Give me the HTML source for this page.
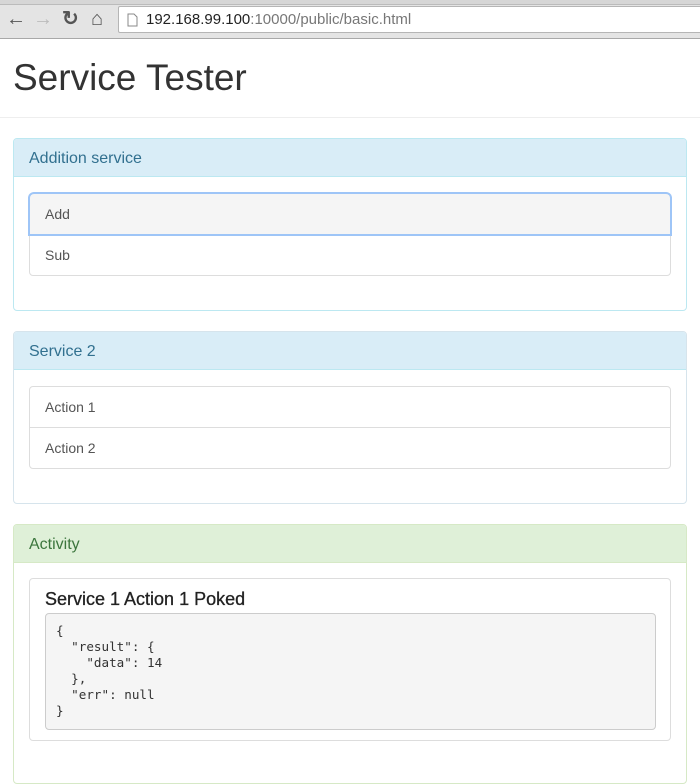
<!DOCTYPE html>
<html><head><meta charset="utf-8"><style>
*{box-sizing:border-box;margin:0;padding:0}
body{width:700px;height:770px;overflow:hidden;background:#fff;font-family:"Liberation Sans",Arial,sans-serif;color:#333;position:relative}
.chrome{position:absolute;left:0;top:0;width:700px;height:39px;background:#e4e4e4;border-bottom:1px solid #a8a8a8}
.tabs{position:absolute;left:0;top:0;width:700px;height:5px;background:#d6d6d6;border-bottom:1px solid #bbb}
.url{position:absolute;left:118px;top:6px;width:590px;height:27px;background:#fff;border:1px solid #b5b5b5;border-radius:2px;font-size:15px;line-height:25px;padding-left:27px;color:#222}
.url span{color:#777}
.ic{position:absolute;top:8px;font-size:20px;color:#555;line-height:22px;font-weight:bold}
h1{position:absolute;left:13px;top:56px;font-size:37px;font-weight:normal;line-height:44px;color:#333}
.hr{position:absolute;left:0;top:117px;width:700px;border-top:1px solid #eee}
.panel{position:absolute;left:13px;width:674px;border:1px solid #bce8f1;border-radius:4px;background:#fff}
.ph{height:38px;background:#d9edf7;border-bottom:1px solid #bce8f1;color:#31708f;font-size:16px;line-height:40px;padding-left:15px;border-radius:3px 3px 0 0}
.green{border-color:#d6e9c6}
.green .ph{background:#dff0d8;border-color:#d6e9c6;color:#3c763d}
.list{position:absolute;left:15px;width:642px;border:1px solid #ddd;border-radius:4px}
.li{height:40px;line-height:40px;padding-left:15px;font-size:14px;color:#555;position:relative}
.li+.li{border-top:1px solid #ddd;height:41px}
.well{position:absolute;left:15px;top:53px;width:642px;height:163px;border:1px solid #ddd;border-radius:4px}
.well h4{position:absolute;left:15px;top:10px;font-size:18px;font-weight:normal;color:#222;-webkit-text-stroke:0.3px #222}
pre{position:absolute;left:15px;top:34px;width:611px;height:117px;background:#f5f5f5;border:1px solid #ccc;border-radius:4px;font-family:"DejaVu Sans Mono",monospace;font-size:12.6px;line-height:16px;padding:9px 10px;color:#333}
</style></head><body>
<div class="chrome"><div class="tabs"></div>
<div class="ic" style="left:6px">&#8592;</div>
<div class="ic" style="left:33px;color:#bbb">&#8594;</div>
<div class="ic" style="left:62px">&#8635;</div>
<div class="ic" style="left:91px">&#8962;</div>
<div class="url"><svg style="position:absolute;left:8px;top:6px" width="11" height="14"><path d="M1 1h6l3 3v9H1z" fill="#fff" stroke="#888"/></svg>192.168.99.100<span>:10000/public/basic.html</span></div>
</div>
<h1>Service Tester</h1>
<div class="hr"></div>
<div class="panel" style="top:138px;height:173px">
<div class="ph">Addition service</div>
<div class="list" style="top:54px"><div class="li" style="background:#f5f5f5;box-shadow:0 0 0 2px #9ec5f7;border-radius:4px 4px 0 0;z-index:1">Add</div><div class="li">Sub</div></div>
</div>
<div class="panel" style="top:331px;height:173px;border-color:#d6e4ec">
<div class="ph">Service 2</div>
<div class="list" style="top:54px"><div class="li">Action 1</div><div class="li">Action 2</div></div>
</div>
<div class="panel green" style="top:524px;height:260px">
<div class="ph">Activity</div>
<div class="well"><h4>Service 1 Action 1 Poked</h4>
<pre>{
  "result": {
    "data": 14
  },
  "err": null
}</pre></div>
</div>
</body></html>
